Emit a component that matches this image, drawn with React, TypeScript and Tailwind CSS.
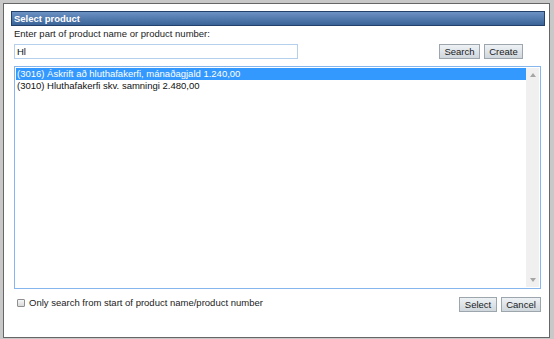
import { useState } from "react";

type Product = {
  id: string;
  label: string;
};

const products: Product[] = [
  { id: "3016", label: "(3016) Áskrift að hluthafakerfi, mánaðagjald 1.240,00" },
  { id: "3010", label: "(3010) Hluthafakerfi skv. samningi 2.480,00" },
];

const font = { fontFamily: '"Liberation Sans", Arial, sans-serif' };

function GrayButton({ children, className = "" }: { children: string; className?: string }) {
  return (
    <button
      className={`flex h-[15px] items-center justify-center border border-[#9ea6ad] bg-gradient-to-b from-[#eef2f5] to-[#cfd7dd] text-[9.5px] leading-none text-[#1a1a1a] ${className}`}
      type="button"
    >
      {children}
    </button>
  );
}

export default function App() {
  const [query, setQuery] = useState("Hl");
  const [selectedId, setSelectedId] = useState("3016");
  const [fromStart, setFromStart] = useState(false);

  return (
    <div className="h-[339px] w-[554px] overflow-hidden bg-[#c8c8c8] pl-[3px] pt-[3px]" style={font}>
      {/* Dialog */}
      <div className="flex h-[335px] w-[547px] flex-col border border-[#666] bg-white">
        {/* Title bar */}
        <div className="ml-[7px] mt-[7px] flex h-[15px] w-[534px] items-center border border-[#23406a] bg-gradient-to-b from-[#6d92c4] to-[#3a6498] pl-[2px]">
          <span className="text-[9.5px] font-bold leading-none text-white">Select product</span>
        </div>

        <div className="flex flex-col pl-[10px]">
          <p className="mt-[2px] h-[12px] text-[9.5px] leading-[12px] text-[#222]">
            Enter part of product name or product number:
          </p>

          {/* Search row */}
          <div className="mt-[4px] flex h-[15px] items-center">
            <input
              className="h-[15px] w-[284px] border border-[#b5d0ec] px-[2px] text-[9.5px] text-[#111] outline-none"
              onChange={(event) => setQuery(event.target.value)}
              type="text"
              value={query}
            />
            <GrayButton className="ml-[141px] w-[41px]">Search</GrayButton>
            <GrayButton className="ml-[4px] w-[39px]">Create</GrayButton>
          </div>

          {/* List */}
          <div className="mt-[7px] flex h-[223px] w-[527px] border border-[#86b6ee] p-[1px]">
            <div className="flex-1">
              {products.map((product) => (
                <div
                  key={product.id}
                  className={
                    product.id === selectedId
                      ? "h-[12px] bg-[#3399ff] pl-[1px] text-[9.5px] leading-[12px] text-white"
                      : "h-[12px] pl-[1px] text-[9.5px] leading-[12px] text-[#111]"
                  }
                  onClick={() => setSelectedId(product.id)}
                >
                  {product.label}
                </div>
              ))}
            </div>
            {/* Scrollbar */}
            <div className="flex w-[13px] flex-col items-center justify-between bg-[#f0f0f0] py-[5px]">
              <svg width="6" height="4" viewBox="0 0 6 4">
                <path d="M3 0 L6 4 L0 4 Z" fill="#a6a6a6" />
              </svg>
              <svg width="6" height="4" viewBox="0 0 6 4">
                <path d="M0 0 L6 0 L3 4 Z" fill="#a6a6a6" />
              </svg>
            </div>
          </div>

          {/* Bottom row */}
          <div className="mt-[8px] flex h-[15px] w-[527px] items-start">
            <label className="flex items-center pl-[3px] pt-[1px]">
              <input
                checked={fromStart}
                className="h-[8px] w-[8px] appearance-none rounded-[1px] border border-[#8f8f8f] bg-gradient-to-b from-[#f6f6f6] to-[#dadada]"
                onChange={(event) => setFromStart(event.target.checked)}
                type="checkbox"
              />
              <span className="ml-[4px] text-[9.5px] leading-[10px] text-[#222]">
                Only search from start of product name/product number
              </span>
            </label>
            <div className="ml-auto flex items-center">
              <GrayButton className="w-[38px]">Select</GrayButton>
              <GrayButton className="ml-[4px] w-[40px]">Cancel</GrayButton>
            </div>
          </div>
        </div>
      </div>
    </div>
  );
}
